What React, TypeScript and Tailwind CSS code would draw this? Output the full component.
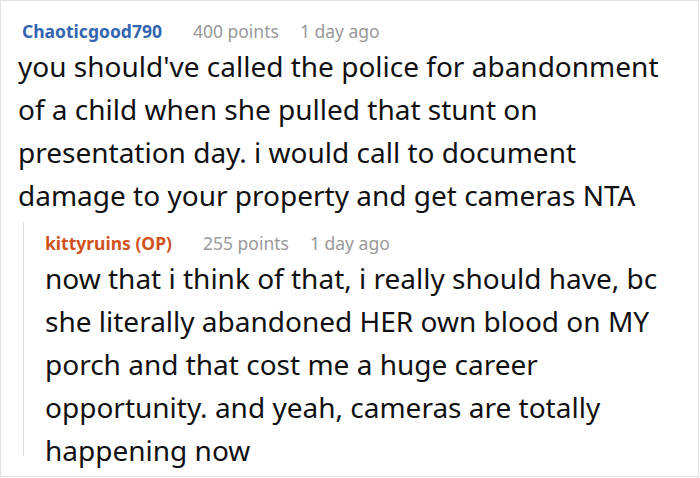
export default function App() {
  return (
    <div className="w-[699px] h-[477px] border border-[#e3e3e3] bg-white overflow-hidden font-['Noto_Sans',sans-serif]">
      <div className="pl-[21px] pr-[16px] pt-[16px]">
        <div className="flex items-baseline text-[17.5px] leading-[28px]">
          <span className="font-bold text-[#3465b0] mr-[31px]">Chaoticgood790</span>
          <span className="text-[#999999] mr-[21px]">400 points</span>
          <span className="text-[#999999]">1 day ago</span>
        </div>
        <p className="-ml-[4px] text-[28px] leading-[43px] text-[#111111]">
          you should've called the police for abandonment of a child when she pulled that stunt on presentation day. i would call to document damage to your property and get cameras NTA
        </p>
      </div>
      <div className="ml-[22px] mt-[5px] border-l border-[#dddddd] pl-[21px] pr-[16px] pt-[7px] h-[234px]">
        <div className="flex items-baseline text-[17.5px] leading-[28px]">
          <span className="font-bold text-[#d0531e] mr-[31px]">kittyruins (OP)</span>
          <span className="text-[#999999] mr-[21px]">255 points</span>
          <span className="text-[#999999]">1 day ago</span>
        </div>
        <p className="text-[28px] leading-[43px] text-[#111111]">
          now that i think of that, i really should have, bc she literally abandoned HER own blood on MY porch and that cost me a huge career opportunity. and yeah, cameras are totally happening now
        </p>
      </div>
    </div>
  )
}
